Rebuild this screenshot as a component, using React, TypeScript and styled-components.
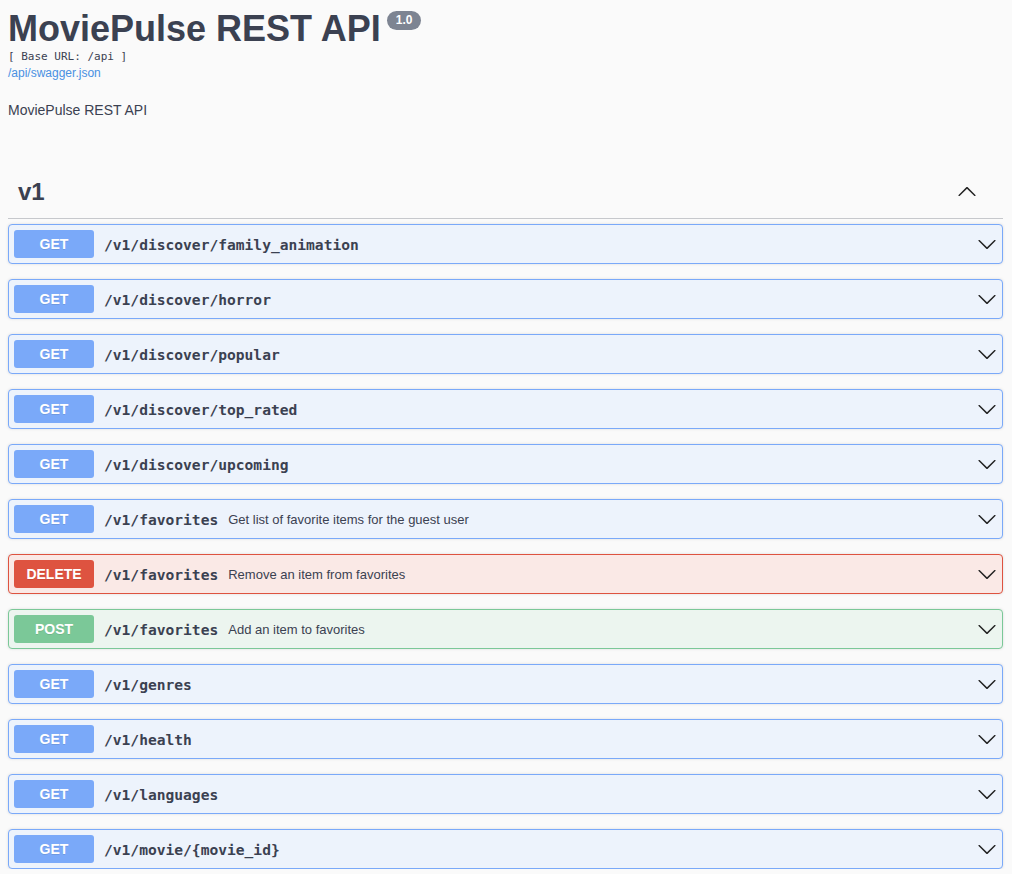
import React from "react";
import styled, { createGlobalStyle } from "styled-components";

const GlobalStyle = createGlobalStyle`
  html, body { margin: 0; padding: 0; background: #fafafa; }
  body { font-family: "Liberation Sans", Arial, sans-serif; color: #3b4151; }
`;

type Method = "GET" | "DELETE" | "POST";

const palette: Record<Method, { main: string; bg: string }> = {
  GET: { main: "#7aa9f9", bg: "#edf3fc" },
  DELETE: { main: "#de5340", bg: "#fae9e6" },
  POST: { main: "#7bc898", bg: "#ecf5ef" },
};

const Page = styled.div`
  padding: 8px 9px 0 8px;
`;

const Info = styled.div`
  display: flex;
  flex-direction: column;
`;

const Title = styled.h2`
  display: flex;
  align-items: flex-start;
  margin: 0;
  font-size: 36px;
  line-height: 41px;
  font-weight: 700;
  color: #3b4151;
`;

const Version = styled.span`
  margin: 3px 0 0 6px;
  padding: 0 9px;
  height: 19px;
  display: inline-flex;
  align-items: center;
  border-radius: 57px;
  background: #7d8492;
  color: #fff;
  font-size: 12px;
  font-weight: 700;
  line-height: 19px;
`;

const BaseUrl = styled.div`
  font-family: "DejaVu Sans Mono", monospace;
  font-size: 11px;
  line-height: 16px;
  color: #3b4151;
`;

const Link = styled.a`
  font-size: 12px;
  line-height: 16px;
  color: #4990e2;
  text-decoration: none;
`;

const Description = styled.p`
  margin: 20px 0 0;
  font-size: 14px;
  line-height: 18px;
  color: #3b4151;
`;

const TagSection = styled.section`
  margin-top: 47px;
`;

const TagHeader = styled.div`
  display: flex;
  align-items: center;
  justify-content: space-between;
  padding: 12px 26px 12px 10px;
  border-bottom: 1px solid #c6c8cc;
`;

const TagName = styled.h3`
  margin: 0;
  font-size: 24px;
  line-height: 28px;
  font-weight: 700;
  color: #3b4151;
`;

const OpList = styled.div`
  display: flex;
  flex-direction: column;
  gap: 15px;
  margin-top: 5px;
`;

const OpBlock = styled.div<{ $method: Method }>`
  display: flex;
  align-items: center;
  padding: 5px;
  height: 38px;
  box-sizing: border-box;
  height: 40px;
  border: 1px solid ${(p) => palette[p.$method].main};
  border-radius: 4px;
  background: ${(p) => palette[p.$method].bg};
  box-shadow: 0 0 3px rgba(0, 0, 0, 0.12);
`;

const MethodBadge = styled.span<{ $method: Method }>`
  flex: none;
  width: 80px;
  height: 28px;
  display: flex;
  align-items: center;
  justify-content: center;
  border-radius: 3px;
  background: ${(p) => palette[p.$method].main};
  color: #fff;
  font-size: 14px;
  font-weight: 700;
  text-shadow: 0 1px 0 rgba(0, 0, 0, 0.1);
`;

const Path = styled.span`
  padding: 0 10px;
  font-family: "DejaVu Sans Mono", monospace;
  font-size: 14.6px;
  font-weight: 700;
  color: #3b4151;
  white-space: nowrap;
`;

const Summary = styled.span`
  flex: 1;
  font-size: 13px;
  color: #3b4151;
`;

const ArrowSvg = styled.svg<{ $up?: boolean }>`
  flex: none;
  width: 20px;
  height: 20px;
  fill: #222;
  transform: ${(p) => (p.$up ? "rotate(180deg)" : "none")};
`;

const Arrow = ({ up }: { up?: boolean }) => (
  <ArrowSvg $up={up} viewBox="0 0 20 20">
    <path d="M17.418 6.109c.272-.268.709-.268.979 0s.271.701 0 .969l-7.908 7.83c-.27.268-.707.268-.979 0l-7.908-7.83c-.27-.268-.27-.701 0-.969.271-.268.709-.268.979 0L10 13.25l7.418-7.141z" />
  </ArrowSvg>
);

const ops: { method: Method; path: string; summary?: string }[] = [
  { method: "GET", path: "/v1/discover/family_animation" },
  { method: "GET", path: "/v1/discover/horror" },
  { method: "GET", path: "/v1/discover/popular" },
  { method: "GET", path: "/v1/discover/top_rated" },
  { method: "GET", path: "/v1/discover/upcoming" },
  { method: "GET", path: "/v1/favorites", summary: "Get list of favorite items for the guest user" },
  { method: "DELETE", path: "/v1/favorites", summary: "Remove an item from favorites" },
  { method: "POST", path: "/v1/favorites", summary: "Add an item to favorites" },
  { method: "GET", path: "/v1/genres" },
  { method: "GET", path: "/v1/health" },
  { method: "GET", path: "/v1/languages" },
  { method: "GET", path: "/v1/movie/{movie_id}" },
];

export default function App() {
  return (
    <>
      <GlobalStyle />
      <Page>
        <Info>
          <Title>
            MoviePulse REST API
            <Version>1.0</Version>
          </Title>
          <BaseUrl>[ Base URL: /api ]</BaseUrl>
          <Link href="#">/api/swagger.json</Link>
          <Description>MoviePulse REST API</Description>
        </Info>
        <TagSection>
          <TagHeader>
            <TagName>v1</TagName>
            <Arrow up />
          </TagHeader>
          <OpList>
            {ops.map((op, i) => (
              <OpBlock key={i} $method={op.method}>
                <MethodBadge $method={op.method}>{op.method}</MethodBadge>
                <Path>{op.path}</Path>
                <Summary>{op.summary}</Summary>
                <Arrow />
              </OpBlock>
            ))}
          </OpList>
        </TagSection>
      </Page>
    </>
  );
}
